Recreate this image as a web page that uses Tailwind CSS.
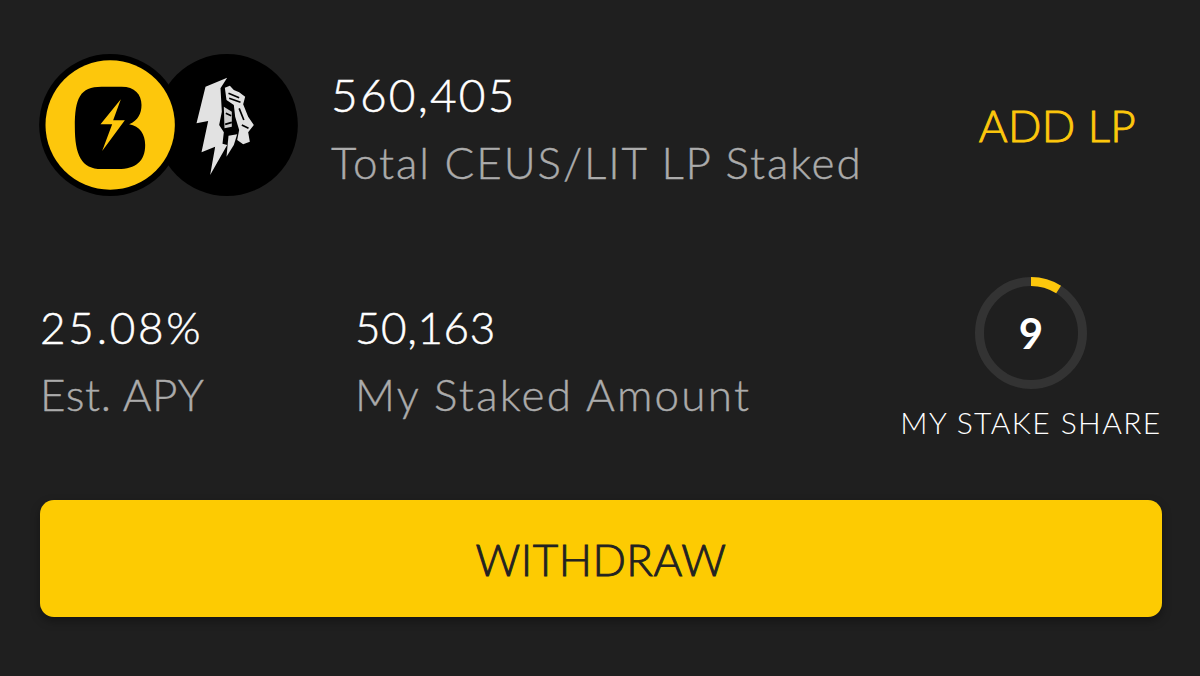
<!DOCTYPE html>
<html lang="en">
<head>
    <meta charset="UTF-8">
    <title>CEUS/LIT Staking</title>
    <script src="https://cdn.jsdelivr.net/npm/@tailwindcss/browser@4"></script>
</head>
<body class="bg-[#1f1f1f] font-['Lato',sans-serif]">
    <div class="w-[1200px] h-[676px] overflow-hidden pl-[39px] pr-[38px] pt-[54px]">
        <!-- Pool header -->
        <div class="flex items-center h-[142px]">
            <svg class="w-[259px] h-[142px] shrink-0" viewBox="28 27 776 426">
                <circle cx="591" cy="240" r="213" fill="#000"/>
                <circle cx="241" cy="240" r="213" fill="#000"/>
                <circle cx="241" cy="240" r="194" fill="#fdc70c"/>
                <path d="M135 245C135 160 150 125 215 125H275C315 125 335 148 335 180C335 205 325 226 298 238C330 244 346 268 346 300C346 348 318 372 265 372H215C155 372 135 330 135 245Z" fill="#000"/>
                <path d="M273 163L212 238H247L217 318L285 226H250Z" fill="#fdc70c"/>
                <path d="M592 98L527 125L500 235L535 228L515 322L556 305L541 390L592 300L578 296L582 262L568 240L576 200L572 130Z" fill="#e2e2e2"/>
                <path d="M585 128L600 122L612 135L628 142L646 155L640 178L655 215L672 240L655 262L660 290L640 298L622 285L628 255L616 215L612 180L590 165Z" fill="#e2e2e2"/>
                <path d="M596 145L628 158M598 160L632 172M628 190L642 225M636 240L656 250" stroke="#000" stroke-width="5" fill="none"/>
                <path d="M582 185L606 200L606 245L584 250Z" fill="#d0d0d0"/>
                <path d="M588 205L604 212M586 238L606 232" stroke="#000" stroke-width="5" fill="none"/>
                <path d="M596 272L622 268L612 300L590 335Z" fill="#e2e2e2"/>
            </svg>
            <div class="ml-[33px] flex-1 mt-[6px]">
                <div class="text-[46px] leading-[68px] tracking-[2.2px] font-light [-webkit-text-stroke:0.5px] text-white">560,405</div>
                <div class="text-[44px] leading-[66px] tracking-[1.9px] font-light [-webkit-text-stroke:0.4px] text-[#ababab]">Total CEUS/LIT LP Staked</div>
            </div>
            <div class="text-[44px] leading-none tracking-[0.3px] font-light [-webkit-text-stroke:0.9px] text-[#fdc70c] mr-[26px]">ADD LP</div>
        </div>

        <!-- Stats -->
        <div class="flex mt-[84px] h-[168px]">
            <div class="w-[315px] ml-[1px] pt-[13px]">
                <div class="text-[44px] leading-[68px] tracking-[2.8px] font-light [-webkit-text-stroke:0.5px] text-white">25.08%</div>
                <div class="text-[44px] leading-[66px] tracking-[0.6px] font-light [-webkit-text-stroke:0.4px] text-[#ababab]">Est. APY</div>
            </div>
            <div class="flex-1 pt-[13px]">
                <div class="text-[44px] leading-[68px] tracking-[0.6px] font-light [-webkit-text-stroke:0.5px] text-white">50,163</div>
                <div class="text-[44px] leading-[66px] tracking-[2.25px] font-light [-webkit-text-stroke:0.4px] text-[#ababab]">My Staked Amount</div>
            </div>
            <div class="w-[262px] flex flex-col items-center">
                <div class="relative w-[112px] h-[112px] mt-[-3px]">
                    <svg class="w-[112px] h-[112px]" viewBox="0 0 112 112">
                        <circle cx="56" cy="56" r="51.5" fill="none" stroke="#333" stroke-width="9"/>
                        <circle cx="56" cy="56" r="51.5" fill="none" stroke="#fdc70c" stroke-width="9" stroke-dasharray="29.1 294.5" transform="rotate(-90 56 56)"/>
                    </svg>
                    <div class="absolute inset-0 flex items-center justify-center text-[42px] font-bold text-white">9</div>
                </div>
                <div class="text-[30px] leading-[40px] mt-[13px] tracking-[1.4px] text-white whitespace-nowrap font-light">MY STAKE SHARE</div>
            </div>
        </div>

        <!-- Action -->
        <button class="block ml-[1px] mt-[52px] w-[1122px] h-[117px] rounded-[14px] bg-[#fdcb02] text-[44px] tracking-[0.5px] font-light [-webkit-text-stroke:0.9px] text-[#222] shadow-[0_4px_10px_rgba(0,0,0,0.35)]">WITHDRAW</button>
    </div>
</body>
</html>
